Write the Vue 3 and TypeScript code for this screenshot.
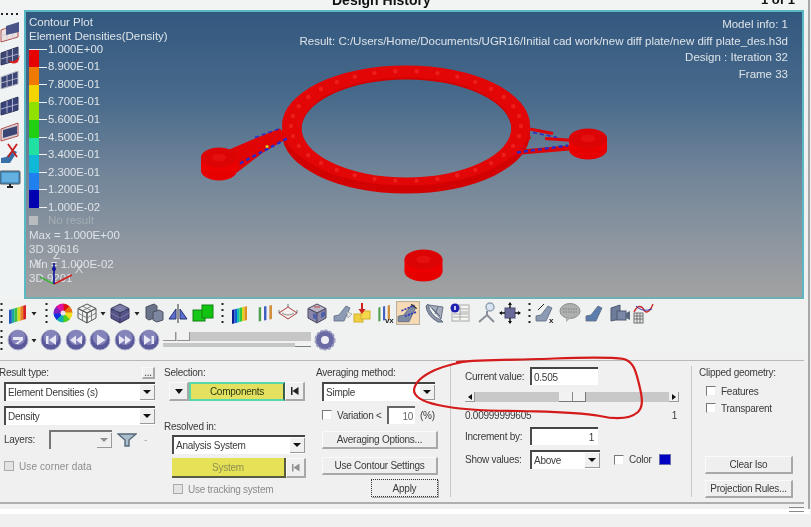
<template>
  <div class="app">
    <div class="window">
      <header class="title-bar">
        <span class="title">Design History</span>
        <span class="page">1 of 1</span>
      </header>

      <div class="main">
        <aside class="side-tools">
          <span class="side-grip"></span>
          <span v-for="(tool, i) in sideTools" :key="i" class="slot" :style="{ height: tool.h + 'px' }" v-html="tool.svg"></span>
        </aside>

        <section class="viewport">
          <svg class="model" viewBox="26 12 776 284">
            <path fill="#d20202" fill-rule="evenodd" :d="ring(133, 60, 129, 50)" />
            <polygon fill="#e00404" points="227,150 255,138 280,128 287,138 263,152 237,172" />
            <g fill="none" stroke="#dc0404">
              <path stroke-width="5" d="M515 152 L575 147" />
              <path stroke-width="3" d="M527 128 L553 133 M530 136 L520 150 M545 138 L575 140" />
            </g>
            <g v-for="boss in bosses" :key="boss.x">
              <ellipse fill="#e60000" :cx="boss.x" :cy="boss.y + boss.h" :rx="boss.r" :ry="boss.ry" />
              <rect fill="#ee0000" :x="boss.x - boss.r" :y="boss.y" :width="boss.r * 2" :height="boss.h" />
              <ellipse fill="#dc0404" :cx="boss.x" :cy="boss.y" :rx="boss.r" :ry="boss.ry" />
              <ellipse fill="#e41010" :cx="boss.x" :cy="boss.y" :rx="boss.r / 2.6" :ry="boss.ry / 2.6" />
            </g>
            <path fill="#e20606" fill-rule="evenodd" :d="ring(125, 60, 127, 50)" />
            <circle v-for="(dot, i) in ringDots" :key="i" :cx="dot.x" :cy="dot.y" r="2.2" fill="#ec1e1e" />
            <g fill="none" stroke="#2a2ac8" stroke-width="2.4" stroke-dasharray="4 3">
              <path d="M240 163 L287 138" />
              <path d="M255 137 L280 128" stroke-width="1.5" />
              <path d="M517 152 L568 145" />
              <path d="M533 132 L557 137" stroke-width="1.5" />
            </g>
            <circle cx="267" cy="146" r="1.6" fill="#d8d020" />
          </svg>

          <div class="legend">
            <div class="legend-line">Contour Plot</div>
            <div class="legend-line">Element Densities(Density)</div>
            <div class="scale">
              <div class="scale-bars">
                <span v-for="color in scaleColors" :key="color" :style="{ background: color }"></span>
              </div>
              <div v-for="value in scaleValues" :key="value" class="scale-row">
                <span class="tick"></span>
                <span>{{ value }}</span>
              </div>
            </div>
            <div class="no-result"><span class="no-result-box"></span>No result</div>
            <div class="legend-line">Max = 1.000E+00</div>
            <div class="legend-line">3D 30616</div>
            <div class="legend-line">Min = 1.000E-02</div>
            <div class="legend-line">3D 9201</div>
          </div>

          <div class="model-info">
            <div>Model info: 1</div>
            <div>Result: C:/Users/Home/Documents/UGR16/Initial cad work/new diff plate/new diff plate_des.h3d</div>
            <div>Design : Iteration 32</div>
            <div>Frame 33</div>
          </div>

          <svg class="triad" viewBox="0 0 60 40">
            <path d="M20 31 L6 24" stroke="#40b040" stroke-width="1.4" />
            <path d="M20 31 L38 22" stroke="#d02020" stroke-width="1.6" />
            <path d="M20 31 L20 10" stroke="#1010a0" stroke-width="1.6" />
            <circle cx="20" cy="16" r="2" fill="#1010a0" />
            <text x="19" y="6" class="triad-text">Z</text>
            <text x="41" y="20" class="triad-text">X</text>
            <text x="0" y="15" class="triad-text">Y</text>
          </svg>
        </section>
      </div>

      <div class="toolbar">
        <span v-for="(tool, i) in topTools" :key="i" class="slot" :style="{ width: tool.w + 'px' }" v-html="tool.svg"></span>
      </div>

      <div class="toolbar">
        <span v-for="(tool, i) in playTools" :key="i" class="slot" :style="{ width: tool.w + 'px' }" v-html="tool.svg"></span>
        <div class="frames">
          <div class="frame-bar"><span class="frame-thumb"></span><span class="frame-thumb"></span></div>
          <div class="speed-bar"><span class="speed-thumb"></span></div>
        </div>
        <span class="slot gear" v-html="gearIcon"></span>
      </div>

      <div class="panel">
        <div class="col col-result">
          <div class="label-row">
            <span class="label result-label">Result type:</span>
            <span class="btn dots">...</span>
          </div>
          <div class="combo mt2"><span>Element Densities (s)</span><i></i></div>
          <div class="combo mt5"><span>Density</span><i></i></div>
          <div class="layers">
            <span class="label">Layers:</span>
            <div class="combo combo-off"><span></span><i></i></div>
            <svg width="20" height="14" viewBox="0 0 20 14">
              <path d="M1 1 H19 L12 7 V13 H8 V7 Z" fill="#a9c0cc" stroke="#56687a" stroke-width="1.4" />
            </svg>
            <span class="dash">-</span>
          </div>
          <label class="check-row off corner"><span class="check"></span>Use corner data</label>
        </div>

        <div class="col col-selection">
          <span class="label">Selection:</span>
          <div class="pick mt2">
            <span class="btn pick-arrow"><b></b></span>
            <span class="pick-main">Components</span>
            <span class="btn pick-end"><em></em></span>
          </div>
          <span class="label resolved">Resolved in:</span>
          <div class="combo resolved-combo"><span>Analysis System</span><i></i></div>
          <div class="pick system">
            <span class="pick-main off">System</span>
            <span class="btn pick-end off"><em></em></span>
          </div>
          <label class="check-row off tracking"><span class="check"></span>Use tracking system</label>
        </div>

        <div class="col col-average">
          <span class="label">Averaging method:</span>
          <div class="combo inset mt2"><span>Simple</span><i></i></div>
          <div class="variation inset">
            <span class="check"></span>
            <span class="variation-text">Variation &lt;</span>
            <span class="field field-small">10</span>
            <span>(%)</span>
          </div>
          <span class="btn wide inset options">Averaging Options...</span>
          <span class="btn wide inset contour">Use Contour Settings</span>
          <span class="btn wide apply">Apply</span>
        </div>

        <div class="col col-iso">
          <div class="iso-row">
            <span class="iso-label">Current value:</span>
            <span class="field">0.505</span>
          </div>
          <div class="scrollbar">
            <span class="scroll-end"><b class="left"></b></span>
            <span class="scroll-thumb" :style="{ left: thumbLeft + 'px' }"></span>
            <span class="scroll-end"><b class="right"></b></span>
          </div>
          <div class="range"><span>0.00999999605</span><span>1</span></div>
          <div class="iso-row increment">
            <span class="iso-label">Increment by:</span>
            <span class="field right">1</span>
          </div>
          <div class="iso-row show-values">
            <span class="iso-label">Show values:</span>
            <div class="combo above"><span>Above</span><i></i></div>
            <span class="check color-check"></span>
            <span class="color-label">Color</span>
            <span class="swatch"></span>
          </div>
        </div>

        <div class="col col-clip">
          <span class="label">Clipped geometry:</span>
          <label class="check-row clip-first"><span class="check"></span>Features</label>
          <label class="check-row clip-second"><span class="check"></span>Transparent</label>
          <span class="btn clip-btn clear">Clear Iso</span>
          <span class="btn clip-btn">Projection Rules...</span>
        </div>
      </div>

      <div class="sash"><span class="sash-grip"></span></div>
    </div>

    <svg class="scribble" viewBox="0 0 811 527">
      <path
        d="M457 362 C480 360 500 360 540 359 C570 358 605 356 624 359 C634 362 636 372 639 384 C642 396 644 406 638 412 C630 419 618 420 600 416 C575 412 550 412 520 411 C490 411 460 410 438 405 C424 402 414 397 414 390 C415 381 424 375 435 370 C445 366 460 362 472 361"
        fill="none"
        stroke="#d41a1a"
        stroke-width="2.2"
        stroke-linecap="round"
      />
    </svg>
  </div>
</template>

<script setup lang="ts">
const thumbLeft = 94

const scaleColors = ['#e60000', '#f07a00', '#f2d400', '#90e000', '#22d012', '#20e0a4', '#10b8d8', '#2080f0', '#0000b0']
const scaleValues = [
  '1.000E+00', '8.900E-01', '7.800E-01', '6.700E-01', '5.600E-01',
  '4.500E-01', '3.400E-01', '2.300E-01', '1.200E-01', '1.000E-02',
]

const bosses = [
  { x: 219, y: 157, h: 13, r: 18, ry: 10 },
  { x: 588, y: 138, h: 11, r: 19, ry: 10 },
  { x: 423.5, y: 259, h: 12, r: 19, ry: 10 },
]

function ellipsePath(cx: number, cy: number, rx: number, ry: number) {
  return `M${cx - rx} ${cy} A${rx} ${ry} 0 1 0 ${cx + rx} ${cy} A${rx} ${ry} 0 1 0 ${cx - rx} ${cy} Z`
}

function ring(outerY: number, outerRy: number, innerY: number, innerRy: number) {
  return ellipsePath(406, outerY, 124, outerRy) + ellipsePath(406.4, innerY, 105, innerRy)
}

const ringDots = Array.from({ length: 34 }, (_, i) => {
  const a = (i / 34) * Math.PI * 2
  return { x: 406 + 115 * Math.cos(a), y: 125.5 + 55 * Math.sin(a) }
})

// small drawing helpers for the toolbar icons, all on a 22x22 box
const svg = (body: string, size = 22) =>
  `<svg width="${size}" height="${size}" viewBox="0 0 22 22" style="flex:none;display:block">${body}</svg>`

function strip(colors: string[], x0: number, y0: number, w: number, h: number, rise: number) {
  const step = w / colors.length
  return colors
    .map((c, i) => {
      const a = x0 + i * step
      const b = a + step
      const ya = y0 - (rise * (a - x0)) / w
      const yb = y0 - (rise * (b - x0)) / w
      return `<polygon fill="${c}" points="${a},${ya} ${b},${yb} ${b},${yb + h} ${a},${ya + h}"/>`
    })
    .join('')
}

function wheel() {
  const colors = ['#e01010', '#e87010', '#f0e020', '#50d020', '#10b0b0', '#1030e0', '#8020c0', '#e010a0']
  const sectors = colors
    .map((c, i) => {
      const a0 = (i / 8) * Math.PI * 2 - Math.PI / 2
      const a1 = ((i + 1) / 8) * Math.PI * 2 - Math.PI / 2
      const p = (a: number) => `${11 + 9 * Math.cos(a)} ${11 + 9 * Math.sin(a)}`
      return `<path fill="${c}" stroke="${c}" d="M11 11 L${p(a0)} A9 9 0 0 1 ${p(a1)} Z"/>`
    })
    .join('')
  return sectors + '<circle cx="11" cy="11" r="2.5" fill="#e8e0f0"/>'
}

const cubeShape = (fill: string, side: string, line: string) =>
  `<polygon points="11,2 20,6.5 11,11 2,6.5" fill="${fill}" stroke="${line}"/>` +
  `<polygon points="2,6.5 11,11 11,21 2,16" fill="${side}" stroke="${line}"/>` +
  `<polygon points="20,6.5 11,11 11,21 20,16" fill="${side}" stroke="${line}"/>`

const ramp = (fill: string) =>
  `<path d="M2 19 V14 L7 13 L14 4 L18 6 L12 19 Z" fill="${fill}" stroke="#5d6a80" stroke-width=".8"/>`

const rainbow = ['#2458c0', '#18a8a0', '#40c040', '#d8d820', '#e88020', '#d82020']
const pale = ['#f0f4f8', '#50a050', '#f4f4f4', '#4060c0', '#f0f0f0', '#d09040']

const dot = `<svg width="6" height="22" viewBox="0 0 6 22" style="flex:none;display:block"><path d="M.5 10 H5.5 L3 13.5 Z" fill="#222"/></svg>`
const grip = `<svg width="3" height="22" viewBox="0 0 3 22" style="flex:none;display:block"><path d="M1.5 1 V21" stroke="#222" stroke-width="2" stroke-dasharray="2 4"/></svg>`

const icons = {
  flag: svg(strip(rainbow, 2, 8, 17, 14, 5)),
  wheel: svg(wheel()),
  wire: svg(
    cubeShape('none', 'none', '#555') +
      '<path d="M6.5 4.2 L15.5 8.7 M15.5 4.2 L6.5 8.7 M6.5 8.7 V18.5 M15.5 8.7 V18.5 M2 11 L11 16 L20 11" stroke="#666" fill="none" stroke-width=".8"/>',
  ),
  solid: svg(
    cubeShape('#7b7ba8', '#54548a', '#3a3a5c') +
      '<path d="M6.5 4.2 L15.5 8.7 M15.5 4.2 L6.5 8.7 M2 11 L11 16 L20 11" stroke="#8888aa" fill="none" stroke-width=".8"/>',
  ),
  blocks: svg(
    '<path d="M3 5 L11 2 L14 4 V15 L6 18 L3 16 Z" fill="#6a7488" stroke="#4a5060"/><path d="M10 10 L16 8 L20 10 V18 L14 20 L10 18 Z" fill="#7d88a0" stroke="#4a5060"/>',
  ),
  mirror: svg(
    '<path d="M2 17 L9 7 V17 Z" fill="#5a70d0" stroke="#2a3070"/><path d="M20 17 L13 7 V17 Z" fill="#5a70d0" stroke="#2a3070"/><path d="M11 2 V21" stroke="#333"/>',
  ),
  green: svg(
    '<rect x="1" y="8" width="12" height="11" fill="#18c818" stroke="#108010"/><rect x="10" y="3" width="11" height="13" fill="#12c412" stroke="#108010"/>',
  ),
  strip: svg(strip(['#101a90', '#1060d8', '#10c0b0', '#30c840', '#e0d020', '#e09020'], 3, 8, 15, 14, 4)),
  pale: svg(strip(pale, 3, 6, 16, 14, 3)),
  saddle: svg(
    '<path d="M2 11 L11 5 L20 11 L11 17 Z" fill="#f4f0f0" stroke="#b04040"/><path d="M5 11 Q11 15 17 11" fill="none" stroke="#909090"/><path d="M11 5 V2 M2 11 V8 M20 11 V8" stroke="#707070"/>',
  ),
  frameCube: svg(
    cubeShape('#bdb8c8', '#8a88a8', '#4a4a60') +
      '<path d="M7 11 L11 13 V18 L7 16 Z M15 11 L19 9 V14 L15 16 Z" fill="#5060a8"/><path d="M8 5 L14 5" stroke="#c04040"/>',
  ),
  ramp: svg(ramp('#8c9ab4') + '<path d="M15 10 L20 12 L16 16 Z" fill="#e8eaf0" stroke="#b0b0b0"/>'),
  yellow: svg(
    '<rect x="3" y="12" width="9" height="8" fill="#f0d040" stroke="#d0b030"/><rect x="10" y="9" width="9" height="8" fill="#f4d84a" stroke="#d0b030"/><path d="M11 1 V9" stroke="#d02020" stroke-width="2"/><path d="M7.5 7 H14.5 L11 12 Z" fill="#d02020"/>',
  ),
  paleVx: svg(
    strip(pale, 2, 6, 14, 14, 3) +
      '<text x="11" y="21" font-size="8" font-family="Liberation Sans, sans-serif" font-weight="bold" fill="#222">vx</text>',
  ),
  active: svg(
    '<rect x=".5" y=".5" width="21" height="21" fill="#f6dab4" stroke="#b8b0a0"/>' +
      ramp('#7e8ba4') +
      '<path d="M5 9 L17 4 M8 14 L19 10" stroke="#3a3ab8" stroke-width="1.6" stroke-dasharray="2 1"/><path d="M14 3 L19 7" stroke="#222"/>',
    24,
  ),
  dish: svg(
    '<path d="M4 2 Q6 14 17 18 L19 20 L14 20 Q3 14 2 4 Z" fill="#8c96a8" stroke="#606a80"/><path d="M5 3 L19 5 L17 17 Z" fill="#a6aebc" stroke="#6a7488"/><path d="M8 6 L16 14 M14 5 L11 12" stroke="#606a80"/>',
  ),
  info: svg(
    '<rect x="3" y="3" width="17" height="16" fill="#f4f4f0" stroke="#a8a8a8"/><path d="M11 7 H19 M11 10 H19 M4 12 H19 M4 15 H19 M11 4 V18" stroke="#a8a8a8"/><circle cx="6" cy="6" r="4.5" fill="#2020b0"/><path d="M6 4 V8" stroke="#fff" stroke-width="1.5"/>',
  ),
  probe: svg(
    '<path d="M11 13 V9 M11 13 L3 20 M11 13 L18 20" stroke="#8a9098" stroke-width="2" fill="none"/><circle cx="14" cy="5" r="4" fill="#d8e4f0" stroke="#90a0b0" stroke-width="1.4"/>',
  ),
  arrows: svg(
    '<rect x="6" y="6" width="10" height="10" fill="#6a6a98" stroke="#4a4a70"/><path d="M11 1 V6 M1 11 H6 M21 11 H16 M11 21 V16" stroke="#111" stroke-width="1.4"/><path d="M9 3 H13 L11 0 Z M3 9 V13 L0 11 Z M19 9 V13 L22 11 Z M9 19 H13 L11 22 Z" fill="#111"/>',
  ),
  rampX: svg(
    ramp('#8c9ab4') +
      '<path d="M4 8 L10 2" stroke="#222"/><text x="15" y="21" font-size="8" font-family="Liberation Sans, sans-serif" font-weight="bold" fill="#222">x</text>',
  ),
  bubble: svg(
    '<ellipse cx="11" cy="9" rx="10" ry="7.5" fill="#aeb0b0" stroke="#8c8e8e"/><path d="M7 16 V20 L12 16 Z" fill="#aeb0b0"/><path d="M4 7 H18 M4 10 H18" stroke="#808080" stroke-dasharray="1.5 1"/>',
  ),
  rampBlue: svg(ramp('#5c7cac')),
  camera: svg(
    '<path d="M2 6 L11 3 V17 L2 19 Z" fill="#6c7c9a" stroke="#505a70"/><rect x="8" y="9" width="9" height="9" fill="#7a88a8" stroke="#505a70"/><path d="M17 11 L21 9 V18 L17 16 Z" fill="#5a6880"/>',
  ),
  chart: svg(
    '<rect x="2" y="11" width="9" height="10" fill="#e8e8e8" stroke="#707070"/><path d="M2 14 H11 M2 17 H11 M5 11 V21 M8 11 V21" stroke="#707070"/><path d="M2 10 C6 2 10 4 12 8 S18 10 21 2" fill="none" stroke="#d02828" stroke-width="1.4"/><path d="M4 4 C9 9 14 9 20 7" fill="none" stroke="#2838a8"/>',
  ),
}

const roundBtn = (glyph: string) =>
  svg(
    `<circle cx="11" cy="11" r="10" fill="#58589a" stroke="#b0b0cc" stroke-width="1"/><circle cx="11" cy="8.5" r="7.5" fill="#8484ba"/>${glyph}`,
  )

const gearIcon = svg(
  '<circle cx="11" cy="11" r="9.5" fill="#6a6aa4" stroke="#9c9cc0" stroke-dasharray="3 1.4" stroke-width="2"/><circle cx="11" cy="11" r="4" fill="#f0f0f4"/>',
)

// the window-pane icons down the left side
const pane = (fill: string, edge: string) =>
  `<polygon points="2,9 19,3 19,16 2,21" fill="${fill}" stroke="${edge}"/>` +
  `<path d="M8 7 V19 M13.5 5 V17.5 M2 15 L19 10" stroke="#c8c8dc" stroke-width=".8"/>`

const sideTools = [
  { h: 24, svg: svg(pane('#ece0de', '#b05050') + '<polygon points="7,5 20,1 20,11 7,14" fill="#4a5488"/>') },
  { h: 22, svg: svg(pane('#3c4674', '#30385c') + '<path d="M9 16 Q16 20 21 11 L19 18 Q13 22 9 16 Z" fill="#d82020"/>') },
  { h: 26, svg: svg(pane('#3c4674', '#b8b8c8')) },
  { h: 26, svg: svg(pane('#38427a', '#30385c')) },
  { h: 26, svg: svg(pane('#e0d0d0', '#b05050') + '<polygon points="4,10 18,6 18,14 4,18" fill="#3c4674"/>') },
  { h: 20, svg: svg('<path d="M2 20 V15 L7 14 L14 7 L18 9 L11 20 Z" fill="#3a70a8"/><path d="M9 1 L18 14 M18 1 L9 14" stroke="#c82020" stroke-width="1.8"/>') },
  {
    h: 30,
    svg: svg('<rect x="1" y="3" width="20" height="13" rx="1" fill="#4490c8" stroke="#555"/><rect x="3" y="5" width="16" height="9" fill="#64b0e0"/><path d="M8 19 H14 M11 16 V19" stroke="#222" stroke-width="2"/>'),
  },
]

const blank = ''
const topTools = [
  { w: 3, svg: grip }, { w: 4, svg: blank },
  { w: 22, svg: icons.flag }, { w: 10, svg: dot }, { w: 14, svg: grip },
  { w: 20, svg: icons.wheel }, { w: 28, svg: icons.wire }, { w: 4, svg: dot },
  { w: 30, svg: icons.solid }, { w: 4, svg: dot }, { w: 30, svg: icons.blocks },
  { w: 18, svg: icons.mirror }, { w: 32, svg: icons.green }, { w: 6, svg: grip },
  { w: 30, svg: icons.strip }, { w: 18, svg: icons.pale }, { w: 30, svg: icons.saddle },
  { w: 28, svg: icons.frameCube }, { w: 24, svg: icons.ramp }, { w: 14, svg: icons.yellow },
  { w: 32, svg: icons.paleVx }, { w: 14, svg: icons.active }, { w: 8, svg: blank },
  { w: 24, svg: icons.dish }, { w: 1, svg: blank }, { w: 24, svg: icons.info },
  { w: 3, svg: blank }, { w: 24, svg: icons.probe }, { w: 22, svg: icons.arrows },
  { w: 16, svg: grip }, { w: 16, svg: icons.rampX }, { w: 5, svg: blank },
  { w: 24, svg: icons.bubble }, { w: 1, svg: blank }, { w: 24, svg: icons.rampBlue },
  { w: 1, svg: blank }, { w: 24, svg: icons.camera }, { w: 22, svg: icons.chart },
]

const playTools = [
  { w: 3, svg: grip },
  { w: 30, svg: roundBtn('<path d="M6 8 H16 V11 L11 15 H8 L13 11 H6 Z" fill="#e8e8f4"/>') },
  { w: 2, svg: dot },
  { w: 32, svg: roundBtn('<rect x="6" y="7" width="2.5" height="8" fill="#e8e8f4"/><path d="M16 6 V16 L9 11 Z" fill="#e8e8f4"/>') },
  { w: 18, svg: roundBtn('<path d="M11 6.5 V15.5 L5 11 Z M17 6.5 V15.5 L11 11 Z" fill="#e8e8f4"/>') },
  { w: 30, svg: roundBtn('<path d="M8 5.5 V16.5 L16.5 11 Z" fill="#e8e8f4"/>') },
  { w: 20, svg: roundBtn('<path d="M5 6.5 V15.5 L11 11 Z M11 6.5 V15.5 L17 11 Z" fill="#e8e8f4"/>') },
  { w: 28, svg: roundBtn('<rect x="13.5" y="7" width="2.5" height="8" fill="#e8e8f4"/><path d="M6 6 V16 L13 11 Z" fill="#e8e8f4"/>') },
]
</script>

<style scoped>
.app {
  position: relative;
  width: 811px;
  height: 527px;
  overflow: hidden;
  background: #f0f0f0;
  font-family: 'Liberation Sans', Arial, sans-serif;
  font-size: 10px;
  letter-spacing: -0.25px;
  color: #3a3a3a;
  filter: blur(0.4px);
}

.window {
  width: 810px;
  height: 512px;
  box-sizing: border-box;
  border-right: 2px solid #a8a8a8;
}

.title-bar {
  height: 10px;
  overflow: hidden;
  display: flex;
  justify-content: space-between;
  padding: 0 13px 0 332px;
  font-size: 13px;
  font-weight: bold;
  line-height: 14px;
  letter-spacing: 0;
  color: #111;
  background: #f2f4f4;
}

.title-bar span {
  margin-top: -7px;
}

.title-bar .title {
  font-size: 14px;
}

.main {
  height: 289px;
  display: flex;
  padding-right: 4px;
}

.side-tools {
  width: 24px;
  flex: none;
  display: flex;
  flex-direction: column;
  background: #f0f3f3;
}

.side-grip {
  height: 10px;
  margin: 0 4px 0 1px;
  background: radial-gradient(circle at 1px 4px, #222 1px, transparent 1.2px) 0 0 / 5px 10px repeat-x;
}

.slot {
  display: flex;
  flex: none;
  align-items: center;
  justify-content: center;
}

.side-tools .slot {
  margin-left: -2px;
  width: 24px;
}

.viewport {
  position: relative;
  flex: 1;
  box-sizing: border-box;
  border: 2px solid #58b8c4;
  border-bottom-color: #6fb0b4;
  background: linear-gradient(180deg, #33587f 0%, #486a8b 30%, #6f8398 55%, #8a949f 78%, #a2a2a2 100%);
  color: #dde3e8;
  font-size: 11.5px;
  letter-spacing: 0;
}

.model {
  position: absolute;
  inset: 0;
  width: 100%;
  height: 100%;
}

.legend {
  position: absolute;
  left: 3px;
  top: 3px;
}

.legend-line {
  height: 14.2px;
  line-height: 14.2px;
  white-space: nowrap;
}

.scale {
  position: relative;
  margin-top: -2.6px;
}

.scale-row {
  height: 17.55px;
  line-height: 17.55px;
  display: flex;
  align-items: center;
  white-space: nowrap;
  font-size: 11.3px;
}

.tick {
  width: 18px;
  height: 1px;
  flex: none;
  margin-right: 1px;
  background: #eef2f4;
}

.scale-bars {
  position: absolute;
  left: 0;
  top: 9px;
  width: 10px;
  display: flex;
  flex-direction: column;
}

.scale-bars span {
  height: 17.55px;
}

.no-result {
  display: flex;
  align-items: center;
  gap: 10px;
  height: 12px;
  margin: -2px 0 2px;
  color: #a6aeb4;
}

.no-result-box {
  width: 9px;
  height: 9px;
  background: #b8bcbe;
}

.model-info {
  position: absolute;
  right: 14px;
  top: 4px;
  text-align: right;
  line-height: 16.5px;
  white-space: nowrap;
}

.triad {
  position: absolute;
  left: 8px;
  top: 241px;
  width: 60px;
  height: 40px;
}

.triad-text {
  font-size: 12px;
  fill: #d8dcde;
  font-family: 'Liberation Sans', sans-serif;
}

.toolbar {
  height: 27px;
  display: flex;
  align-items: center;
  background: #f0f2f2;
}

.frames {
  width: 148px;
  flex: none;
}

.frame-bar {
  height: 9px;
  display: flex;
  gap: 1px;
  background: #c6c6c6;
}

.frame-thumb {
  width: 13px;
  background: #f2f2f2;
  border-bottom: 1px solid #909090;
  border-right: 1px solid #909090;
  box-sizing: border-box;
}

.speed-bar {
  height: 4px;
  margin-top: 2px;
  background: #c6c6c6;
  display: flex;
  justify-content: flex-end;
}

.speed-thumb {
  width: 16px;
  background: #f2f2f2;
  border-bottom: 1px solid #808080;
  box-sizing: border-box;
}

.gear {
  width: 28px;
}

.panel {
  height: 141px;
  margin-top: 7px;
  margin-right: 4px;
  border-top: 1px solid #b8b8b8;
  display: grid;
  grid-template-columns: 164px 152px 134px 241px 1fr;
}

.col {
  display: flex;
  flex-direction: column;
  align-items: flex-start;
  padding-top: 5px;
  box-sizing: border-box;
  min-width: 0;
}

.label {
  height: 14px;
  line-height: 14px;
  white-space: nowrap;
}

.mt2 {
  margin-top: 2px;
}

.mt5 {
  margin-top: 5px;
}

.label-row {
  display: flex;
  justify-content: space-between;
  align-items: center;
  width: 155px;
  height: 14px;
}

.result-label {
  margin-left: -1px;
}

.dots {
  width: 13px;
  height: 12px;
  line-height: 7px;
}

.col-result .combo {
  margin-left: 4px;
  width: 151px;
}

.combo {
  display: flex;
  align-items: center;
  justify-content: space-between;
  height: 19px;
  box-sizing: border-box;
  background: #fff;
  border-top: 2px solid #444;
  border-left: 2px solid #4c4c4c;
  padding-left: 2px;
  white-space: nowrap;
}

.combo i {
  position: relative;
  width: 15px;
  height: 15px;
  flex: none;
  background: #f0f0f0;
  border-right: 1px solid #999;
  border-bottom: 1px solid #999;
  box-sizing: border-box;
}

.combo i::after {
  content: '';
  position: absolute;
  left: 3px;
  top: 5px;
  border: 4px solid transparent;
  border-top: 4px solid #111;
  border-bottom: 0;
}

.layers {
  display: flex;
  align-items: center;
  gap: 5px;
  margin: 5px 0 0 4px;
  height: 19px;
}

.col-result .layers .combo {
  width: 63px;
  margin-left: 9px;
  background: #f0f0f0;
  border-color: #777;
}

.combo-off i::after {
  border-top-color: #909090;
}

.dash {
  margin-left: 2px;
  color: #aaa;
}

.check-row {
  display: flex;
  align-items: center;
  gap: 5px;
  height: 14px;
  white-space: nowrap;
}

.check {
  width: 10px;
  height: 10px;
  flex: none;
  box-sizing: border-box;
  background: #fff;
  border-top: 1px solid #777;
  border-left: 1px solid #777;
  border-right: 1px solid #eee;
  border-bottom: 1px solid #eee;
}

.off {
  color: #8c8c8c;
}

.off .check {
  background: #e4e4e4;
  border-color: #aaa;
}

.corner {
  margin: 10px 0 0 4px;
  letter-spacing: 0.1px;
}

.btn {
  display: inline-flex;
  align-items: center;
  justify-content: center;
  box-sizing: border-box;
  background: #efefef;
  border-top: 1px solid #fafafa;
  border-left: 1px solid #fafafa;
  border-right: 2px solid #a8a8a8;
  border-bottom: 2px solid #a8a8a8;
  white-space: nowrap;
}

.pick {
  display: flex;
  height: 19px;
  margin-left: 5px;
}

.pick-arrow {
  width: 20px;
}

.pick-arrow b {
  border: 4px solid transparent;
  border-top: 5px solid #111;
  border-bottom: 0;
}

.pick-main {
  width: 96px;
  display: flex;
  align-items: center;
  justify-content: center;
  box-sizing: border-box;
  background: #e4e060;
  border: 2px solid #58d8a8;
  border-right: 2px solid #38604c;
  color: #2a3a10;
}

.pick-main.off {
  width: 114px;
  background: #e6e258;
  border: 0;
  border-bottom: 2px solid #5a5a40;
  border-right: 2px solid #5a5a40;
  color: #908f50;
}

.pick-end {
  width: 20px;
}

.pick-end em {
  display: block;
  width: 8px;
  height: 8px;
  clip-path: polygon(0 0, 2px 0, 2px 50%, 100% 0, 100% 100%, 2px 50%, 2px 100%, 0 100%);
  background: #222;
}

.pick-end.off em {
  background: #909090;
}

.resolved {
  margin-top: 19px;
}

.resolved-combo {
  margin: 1px 0 0 8px;
  width: 133px;
}

.system {
  margin: 4px 0 0 8px;
  height: 20px;
}

.tracking {
  margin: 4px 0 0 9px;
}

.inset {
  margin-left: 6px;
}

.col-average .combo {
  width: 113px;
}

.variation {
  display: flex;
  align-items: center;
  height: 18px;
  margin-top: 5px;
  white-space: nowrap;
}

.variation-text {
  margin: 0 5px;
  width: 45px;
}

.field {
  display: flex;
  align-items: center;
  width: 68px;
  height: 18px;
  flex: none;
  box-sizing: border-box;
  padding: 0 2px;
  background: #fff;
  border-top: 2px solid #444;
  border-left: 2px solid #4c4c4c;
}

.field.right {
  justify-content: flex-end;
  padding-right: 4px;
}

.field-small {
  width: 28px;
  margin-right: 5px;
  justify-content: flex-end;
  border-color: #666;
  color: #666;
}

.wide {
  width: 116px;
  height: 18px;
}

.options {
  margin-top: 7px;
}

.contour {
  margin-top: 8px;
}

.apply {
  width: 67px;
  margin: 4px 0 0 55px;
  border: 1px dotted #333;
  box-shadow: 1px 1px 0 #a8a8a8;
}

.col-iso {
  padding: 1px 0 0 14px;
  border-left: 1px solid #c8c8c8;
  border-right: 1px solid #c8c8c8;
  margin: 5px 0;
  width: 242px;
}

.iso-row {
  display: flex;
  align-items: center;
}

.iso-label {
  width: 65px;
  flex: none;
  white-space: nowrap;
}

.scrollbar {
  position: relative;
  display: flex;
  justify-content: space-between;
  width: 214px;
  height: 10px;
  margin-top: 7px;
  background: #c8c8c8;
}

.scroll-end {
  display: flex;
  align-items: center;
  justify-content: center;
  width: 10px;
  background: #f0f0f0;
  border-right: 1px solid #999;
  border-bottom: 1px solid #999;
  box-sizing: border-box;
}

.scroll-end b {
  border: 3px solid transparent;
}

.scroll-end .left {
  border-right: 4px solid #111;
  border-left: 0;
}

.scroll-end .right {
  border-left: 4px solid #111;
  border-right: 0;
}

.scroll-thumb {
  position: absolute;
  top: 0;
  width: 27px;
  height: 10px;
  background: linear-gradient(90deg, #f2f2f2 13px, #888 13px, #888 14px, #f2f2f2 14px);
  border-right: 1px solid #777;
  border-bottom: 1px solid #777;
  box-sizing: border-box;
}

.range {
  display: flex;
  justify-content: space-between;
  width: 212px;
  height: 14px;
  line-height: 14px;
  margin-top: 7px;
}

.increment {
  margin-top: 4px;
}

.show-values {
  margin-top: 5px;
}

.above {
  width: 70px;
}

.color-check {
  margin-left: 14px;
}

.color-label {
  margin-left: 5px;
  width: 23px;
}

.swatch {
  width: 12px;
  height: 11px;
  margin-left: 7px;
  background: #0000c4;
  border: 1px solid #6a6ab0;
  box-sizing: border-box;
}

.col-clip {
  padding-left: 8px;
}

.clip-first {
  margin: 4px 0 0 7px;
}

.clip-second {
  margin: 3px 0 0 7px;
}

.clip-btn {
  width: 88px;
  height: 18px;
  margin: 6px 0 0 6px;
}

.clear {
  margin-top: 41px;
}

.sash {
  position: relative;
  height: 8px;
  margin-right: 4px;
  border-top: 2px solid #aeaeae;
  border-bottom: 1px solid #aeaeae;
  box-sizing: border-box;
  background: #f0f0f0;
}

.sash::after {
  content: '';
  position: absolute;
  left: 0;
  right: -6px;
  top: 5px;
  height: 5px;
  background: #fff;
}

.sash-grip {
  position: absolute;
  z-index: 1;
  right: 0;
  top: 3px;
  width: 15px;
  height: 5px;
  border-top: 1px solid #8a8a8a;
  border-bottom: 1px solid #8a8a8a;
  box-sizing: border-box;
}

.scribble {
  position: absolute;
  inset: 0;
  width: 811px;
  height: 527px;
  pointer-events: none;
}
</style>
